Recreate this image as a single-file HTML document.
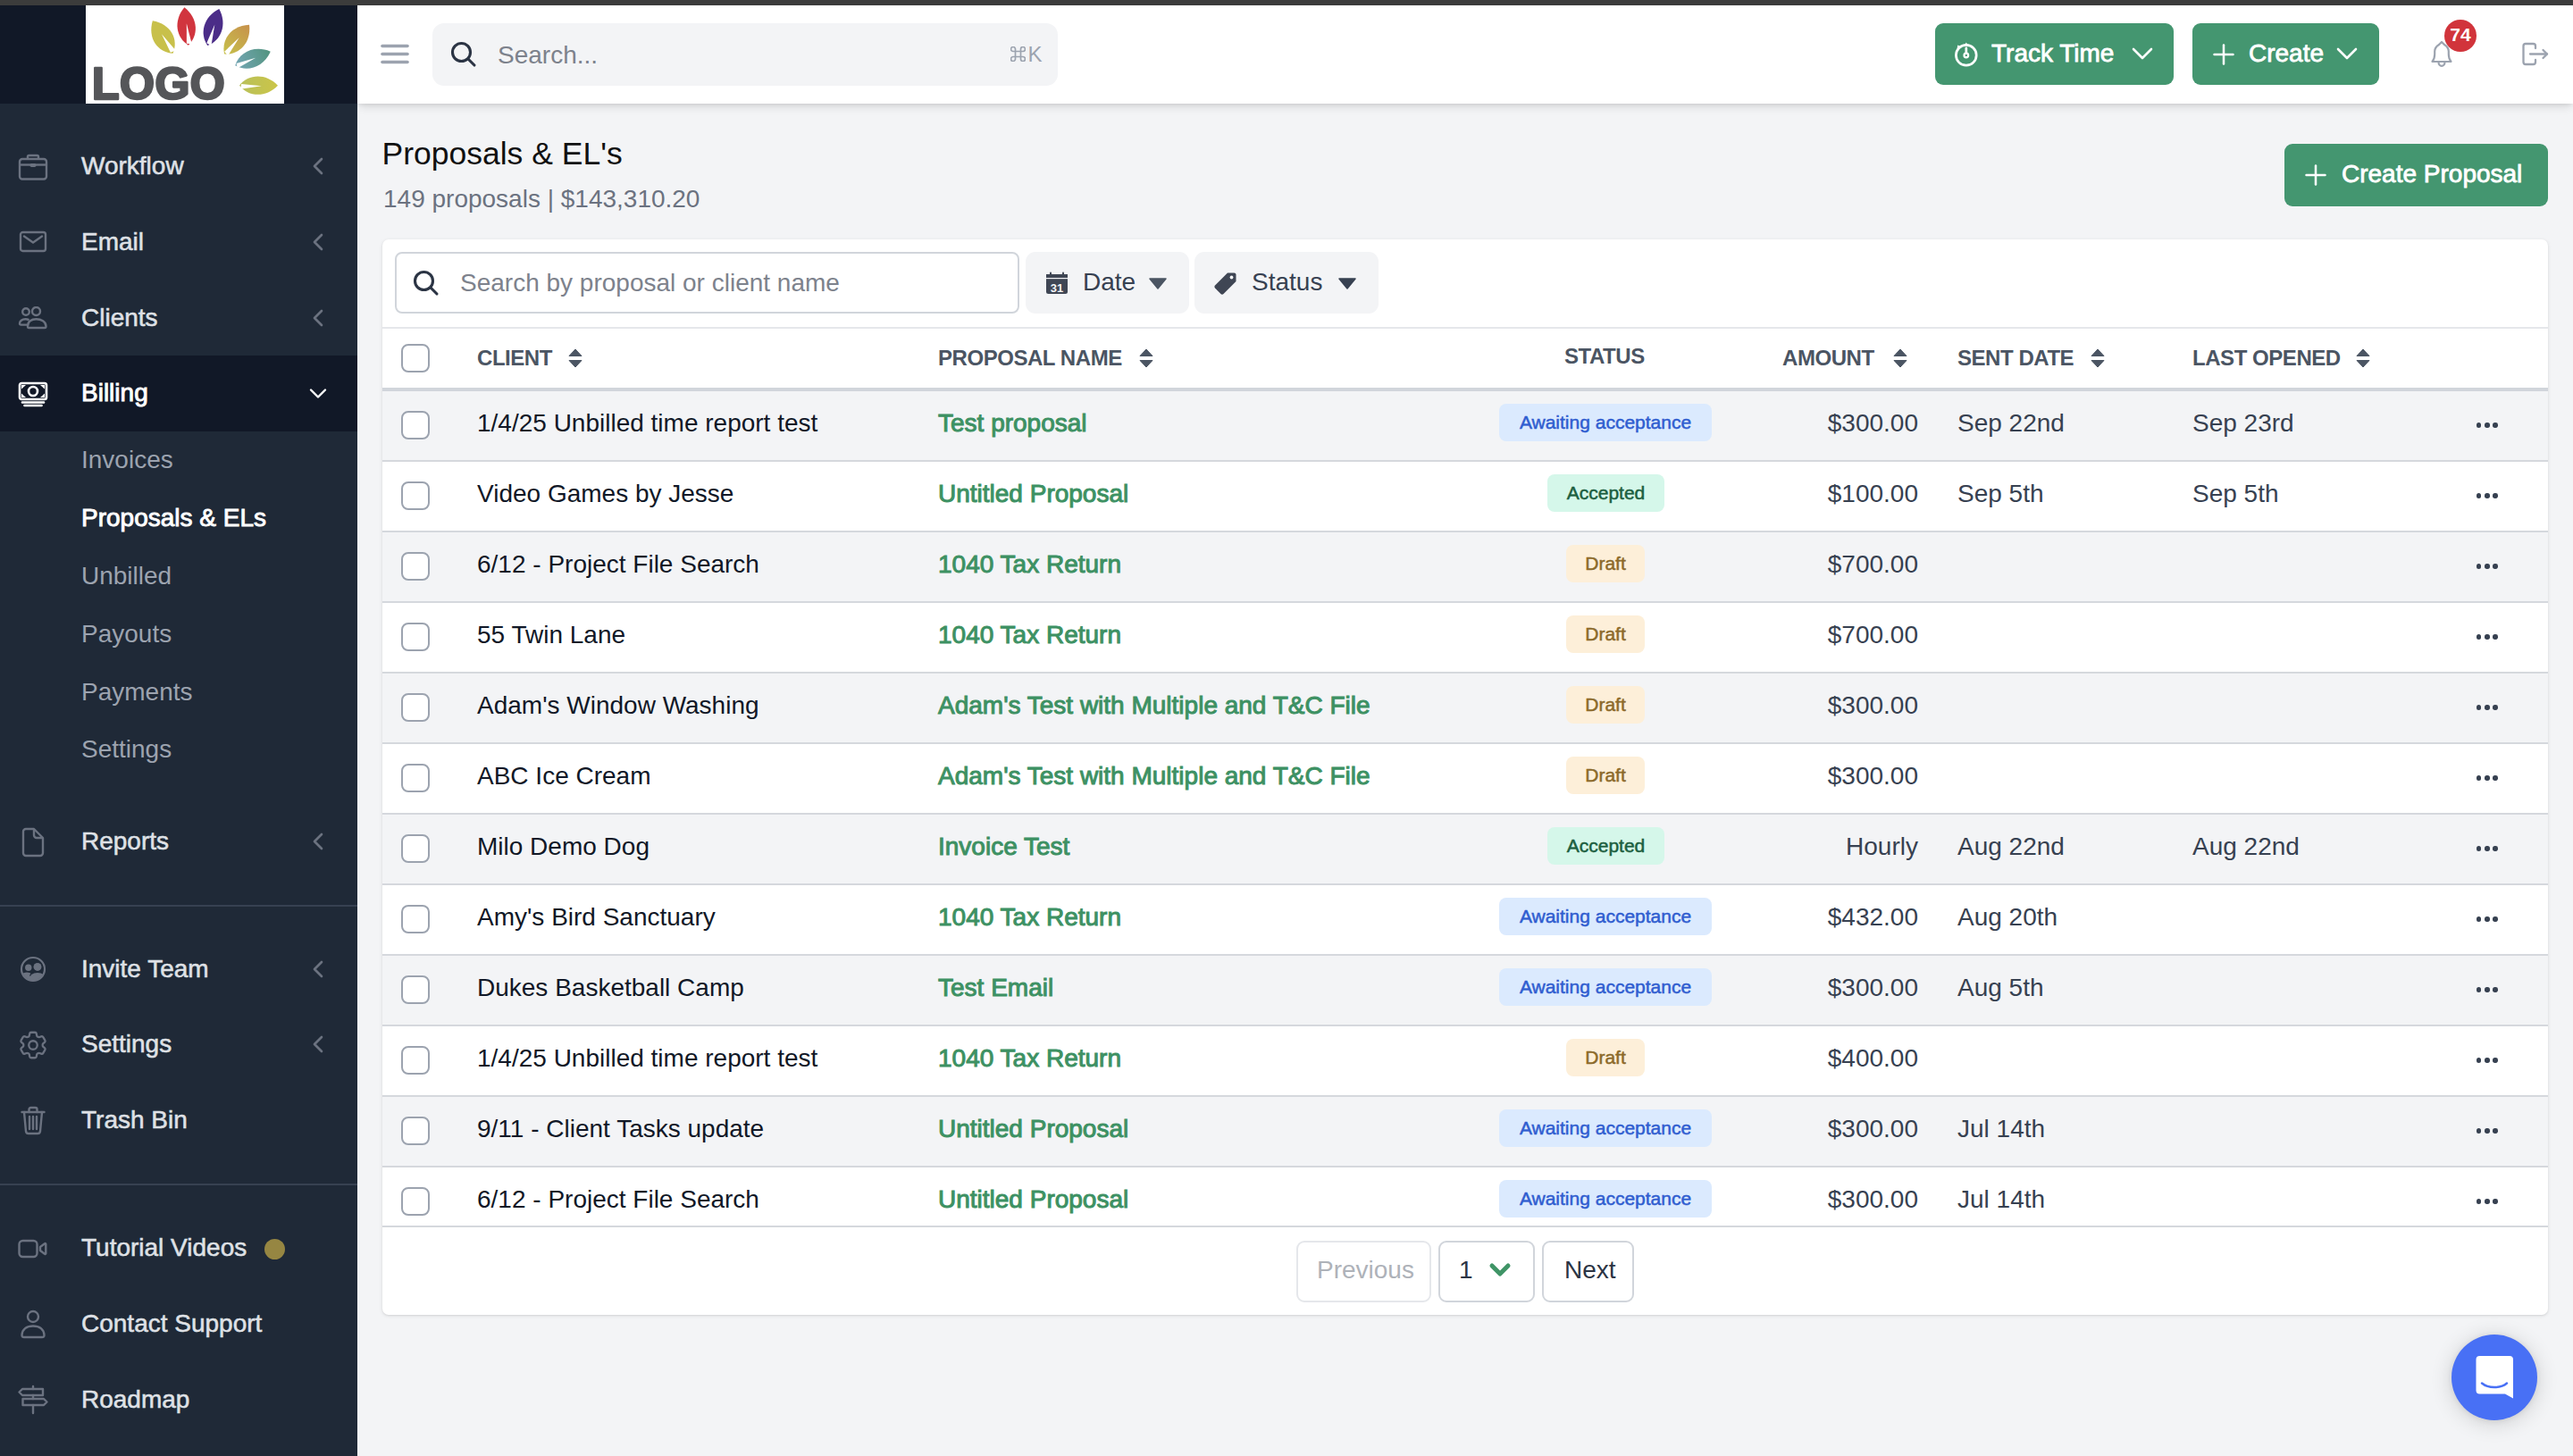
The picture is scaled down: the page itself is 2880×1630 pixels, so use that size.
<!DOCTYPE html>
<html><head><meta charset="utf-8"><title>Proposals</title>
<style>
*{box-sizing:border-box;margin:0;padding:0}
html,body{width:2880px;height:1630px;overflow:hidden;background:#f3f4f6;font-family:"Liberation Sans",sans-serif}
.a{position:absolute;display:block}
.t{position:absolute;white-space:nowrap;font-family:"Liberation Sans",sans-serif}
</style></head><body>

<div class="a" style="left:0px;top:0px;width:2880px;height:6px;background:#3c3c3c"></div>
<div class="a" style="left:400px;top:116px;width:2480px;height:1514px;background:#f3f4f6"></div>
<div class="a" style="left:400px;top:6px;width:2480px;height:110px;background:#ffffff;box-shadow:0 5px 10px -2px rgba(0,0,0,0.13),0 2px 4px -1px rgba(0,0,0,0.08)"></div>
<div class="a" style="left:0px;top:6px;width:400px;height:1624px;background:#1f2937"></div>
<div class="a" style="left:0px;top:6px;width:400px;height:110px;background:#111827"></div>
<div class="a" style="left:96px;top:6px;width:222px;height:110px;background:#ffffff"></div>
<svg class="a" style="left:96px;top:6px;" width="222" height="110" viewBox="0 0 222 110"><defs><linearGradient id="g4" x1="0" y1="1" x2="0" y2="0"><stop offset="0" stop-color="#c6c04a"/><stop offset="1" stop-color="#c7914c"/></linearGradient><linearGradient id="g5" x1="0" y1="1" x2="0" y2="0"><stop offset="0" stop-color="#74a6b4"/><stop offset="1" stop-color="#52947f"/></linearGradient><linearGradient id="g6" x1="0" y1="1" x2="0" y2="0"><stop offset="0" stop-color="#b8c05a"/><stop offset="1" stop-color="#cbc548"/></linearGradient></defs><g transform="translate(86.2,35.4) rotate(-32)"><path d="M0 -21.5 C 15.625 -7.5249999999999995 13.750000000000002 11.825000000000001 0 21.5 C -13.750000000000002 11.825000000000001 -15.625 -7.5249999999999995 0 -21.5 Z" fill="#c8c04a"/><path d="M0.625 -3.225 L4.375 20.425 L-1.875 19.35 Z" fill="#ffffff"/></g><g transform="translate(112.6,23.5) rotate(-6)"><path d="M0 -21.25 C 14.375 -7.437499999999999 12.65 11.687500000000002 0 21.25 C -12.65 11.687500000000002 -14.375 -7.437499999999999 0 -21.25 Z" fill="#d1353e"/><path d="M0.5750000000000001 -3.1875 L4.0249999999999995 20.1875 L-1.7249999999999999 19.125 Z" fill="#ffffff"/></g><g transform="translate(142.8,24.4) rotate(17.6)"><path d="M0 -21.5 C 14.375 -7.5249999999999995 12.65 11.825000000000001 0 21.5 C -12.65 11.825000000000001 -14.375 -7.5249999999999995 0 -21.5 Z" fill="#4b2d88"/><path d="M0.5750000000000001 -3.225 L4.0249999999999995 20.425 L-1.7249999999999999 19.35 Z" fill="#ffffff"/></g><g transform="translate(169.1,38.2) rotate(40.4)"><path d="M0 -21.5 C 15.0 -7.5249999999999995 13.200000000000001 11.825000000000001 0 21.5 C -13.200000000000001 11.825000000000001 -15.0 -7.5249999999999995 0 -21.5 Z" fill="url(#g4)"/><path d="M0.6000000000000001 -3.225 L4.199999999999999 20.425 L-1.7999999999999998 19.35 Z" fill="#ffffff"/></g><g transform="translate(187.0,59.5) rotate(68.4)"><path d="M0 -21.25 C 13.75 -7.437499999999999 12.100000000000001 11.687500000000002 0 21.25 C -12.100000000000001 11.687500000000002 -13.75 -7.437499999999999 0 -21.25 Z" fill="url(#g5)"/><path d="M0.55 -3.1875 L3.8499999999999996 20.1875 L-1.65 19.125 Z" fill="#ffffff"/></g><g transform="translate(193.5,89.7) rotate(90)"><path d="M0 -21.5 C 14.375 -7.5249999999999995 12.65 11.825000000000001 0 21.5 C -12.65 11.825000000000001 -14.375 -7.5249999999999995 0 -21.5 Z" fill="url(#g6)"/><path d="M0.5750000000000001 -3.225 L4.0249999999999995 20.425 L-1.7249999999999999 19.35 Z" fill="#ffffff"/></g><text x="7" y="105" font-family="Liberation Sans" font-weight="700" font-size="50" fill="#555659" stroke="#555659" stroke-width="2.6" stroke-linejoin="round" letter-spacing="0.5">LOGO</text></svg>
<svg class="a" style="left:20px;top:172px;" width="34" height="30" viewBox="0 0 34 30"><g fill="none" stroke="#6b7280" stroke-width="2.4" stroke-linejoin="round"><rect x="2" y="6" width="30" height="22.5" rx="3"/><path d="M11 6 V3.5 a1.5 1.5 0 0 1 1.5-1.5 h9 a1.5 1.5 0 0 1 1.5 1.5 V6"/><path d="M2 12.5 H32"/></g><rect x="13.5" y="11" width="7" height="4" rx="1.8" fill="#6b7280"/></svg>
<div class="t " style="left:91.0px;top:172.3px;font-size:28px;line-height:28px;color:#dfe1e6;-webkit-text-stroke:0.55px #dfe1e6;">Workflow</div>
<svg class="a" style="left:349px;top:176px;" width="14" height="20" viewBox="0 0 14 20"><path d="M11 2 L3 10 L11 18" fill="none" stroke="#6b7280" stroke-width="2.7" stroke-linecap="round" stroke-linejoin="round"/></svg>
<svg class="a" style="left:21px;top:258px;" width="32" height="26" viewBox="0 0 32 26"><g fill="none" stroke="#6b7280" stroke-width="2.4" stroke-linejoin="round" stroke-linecap="round"><rect x="2" y="2" width="28" height="21" rx="2.5"/><path d="M6 6.5 L16 13.5 L26 6.5"/></g></svg>
<div class="t " style="left:91.0px;top:257.3px;font-size:28px;line-height:28px;color:#dfe1e6;-webkit-text-stroke:0.55px #dfe1e6;">Email</div>
<svg class="a" style="left:349px;top:261px;" width="14" height="20" viewBox="0 0 14 20"><path d="M11 2 L3 10 L11 18" fill="none" stroke="#6b7280" stroke-width="2.7" stroke-linecap="round" stroke-linejoin="round"/></svg>
<svg class="a" style="left:20px;top:343px;" width="34" height="26" viewBox="0 0 34 26"><g fill="none" stroke="#6b7280" stroke-width="2.4" stroke-linejoin="round"><circle cx="9" cy="6" r="3.8"/><circle cx="20.5" cy="5.5" r="4.5"/><path d="M12.5 15.2 C11 14.5 10 14.3 8.5 14.3 C4.5 14.3 2 16.5 2 19 C2 20 2.6 20.6 3.6 20.6 H10.5"/><path d="M11 22.2 C11 17 15 14.2 20.5 14.2 C26 14.2 31.5 17 31.5 22.2 C31.5 23.2 31 24 30 24 H12.2 C11.5 24 11 23.2 11 22.2 Z"/></g></svg>
<div class="t " style="left:91.0px;top:342.3px;font-size:28px;line-height:28px;color:#dfe1e6;-webkit-text-stroke:0.55px #dfe1e6;">Clients</div>
<svg class="a" style="left:349px;top:346px;" width="14" height="20" viewBox="0 0 14 20"><path d="M11 2 L3 10 L11 18" fill="none" stroke="#6b7280" stroke-width="2.7" stroke-linecap="round" stroke-linejoin="round"/></svg>
<div class="a" style="left:0px;top:398px;width:400px;height:85px;background:#111827"></div>
<svg class="a" style="left:19px;top:426px;" width="36" height="30" viewBox="0 0 36 30"><g fill="none" stroke="#ffffff" stroke-width="2.6" stroke-linejoin="round"><rect x="3" y="3" width="30" height="18" rx="2.2"/><circle cx="18" cy="12" r="5"/></g><g fill="#ffffff"><path d="M5 5 h5 l-5 4.5z"/><path d="M31 5 h-5 l5 4.5z"/><path d="M5 19 h5 l-5 -4.5z"/><path d="M31 19 h-5 l5 -4.5z"/></g><g stroke="#ffffff" stroke-width="2.6" stroke-linecap="round"><path d="M6 24.5 H30"/><path d="M8.5 28 H27.5"/></g></svg>
<div class="t " style="left:91.0px;top:426.3px;font-size:28px;line-height:28px;color:#ffffff;-webkit-text-stroke:0.9px #ffffff;">Billing</div>
<svg class="a" style="left:345px;top:432px;" width="22" height="18" viewBox="0 0 22 18"><path d="M3 4.5 L11 12.5 L19 4.5" fill="none" stroke="#ffffff" stroke-width="2.4" stroke-linecap="round" stroke-linejoin="round"/></svg>
<div class="t " style="left:91.0px;top:501.3px;font-size:28px;line-height:28px;color:#9ca3af;">Invoices</div>
<div class="t " style="left:91.0px;top:566.1px;font-size:28px;line-height:28px;color:#ffffff;-webkit-text-stroke:0.9px #ffffff;">Proposals &amp; ELs</div>
<div class="t " style="left:91.0px;top:630.9px;font-size:28px;line-height:28px;color:#9ca3af;">Unbilled</div>
<div class="t " style="left:91.0px;top:695.7px;font-size:28px;line-height:28px;color:#9ca3af;">Payouts</div>
<div class="t " style="left:91.0px;top:760.5px;font-size:28px;line-height:28px;color:#9ca3af;">Payments</div>
<div class="t " style="left:91.0px;top:825.3px;font-size:28px;line-height:28px;color:#9ca3af;">Settings</div>
<svg class="a" style="left:23px;top:926px;" width="28" height="34" viewBox="0 0 28 34"><g fill="none" stroke="#6b7280" stroke-width="2.4" stroke-linejoin="round"><path d="M3 5 a3 3 0 0 1 3-3 h9 l10 10 v17 a3 3 0 0 1 -3 3 H6 a3 3 0 0 1 -3-3 Z"/><path d="M15 2 v7 a3 3 0 0 0 3 3 h7"/></g></svg>
<div class="t " style="left:91.0px;top:928.3px;font-size:28px;line-height:28px;color:#dfe1e6;-webkit-text-stroke:0.55px #dfe1e6;">Reports</div>
<svg class="a" style="left:349px;top:932px;" width="14" height="20" viewBox="0 0 14 20"><path d="M11 2 L3 10 L11 18" fill="none" stroke="#6b7280" stroke-width="2.7" stroke-linecap="round" stroke-linejoin="round"/></svg>
<div class="a" style="left:0px;top:1013px;width:400px;height:2px;background:#374151"></div>
<svg class="a" style="left:21px;top:1069px;" width="32" height="32" viewBox="0 0 32 32"><defs><clipPath id="cc"><circle cx="16" cy="16" r="12.5"/></clipPath></defs><circle cx="16" cy="16" r="13" fill="none" stroke="#6b7280" stroke-width="2.2"/><g clip-path="url(#cc)" fill="#6b7280"><circle cx="10.8" cy="14.2" r="3.7"/><circle cx="21" cy="13.4" r="4.5"/><ellipse cx="9" cy="26" rx="8" ry="6.5"/><ellipse cx="21" cy="28" rx="10" ry="8"/></g><path d="M12.5 23.5 L15 19.5" stroke="#1f2937" stroke-width="1.4"/></svg>
<div class="t " style="left:91.0px;top:1071.3px;font-size:28px;line-height:28px;color:#dfe1e6;-webkit-text-stroke:0.55px #dfe1e6;">Invite Team</div>
<svg class="a" style="left:349px;top:1075px;" width="14" height="20" viewBox="0 0 14 20"><path d="M11 2 L3 10 L11 18" fill="none" stroke="#6b7280" stroke-width="2.7" stroke-linecap="round" stroke-linejoin="round"/></svg>
<svg class="a" style="left:18px;top:1151px;overflow:visible" width="38" height="38" viewBox="0 0 24 24"><g fill="none" stroke="#6b7280" stroke-width="1.45" stroke-linejoin="round"><path d="M9.594 3.94c.09-.542.56-.94 1.11-.94h2.593c.55 0 1.02.398 1.11.94l.213 1.281c.063.374.313.686.645.87.074.04.147.083.22.127.325.196.72.257 1.075.124l1.217-.456a1.125 1.125 0 0 1 1.37.49l1.296 2.247a1.125 1.125 0 0 1-.26 1.431l-1.003.827c-.293.241-.438.613-.43.992a7.723 7.723 0 0 1 0 .255c-.008.378.137.75.43.991l1.004.827c.424.35.534.955.26 1.43l-1.298 2.247a1.125 1.125 0 0 1-1.369.491l-1.217-.456c-.355-.133-.75-.072-1.076.124a6.47 6.47 0 0 1-.22.128c-.331.183-.581.495-.644.869l-.213 1.281c-.09.543-.56.94-1.11.94h-2.594c-.55 0-1.019-.398-1.11-.94l-.213-1.281c-.062-.374-.312-.686-.644-.87a6.52 6.52 0 0 1-.22-.127c-.325-.196-.72-.257-1.076-.124l-1.217.456a1.125 1.125 0 0 1-1.369-.49l-1.297-2.247a1.125 1.125 0 0 1 .26-1.431l1.004-.827c.292-.24.437-.613.43-.991a6.932 6.932 0 0 1 0-.255c.007-.38-.138-.751-.43-.992l-1.004-.827a1.125 1.125 0 0 1-.26-1.43l1.297-2.247a1.125 1.125 0 0 1 1.37-.491l1.216.456c.356.133.751.072 1.076-.124.072-.044.146-.086.22-.128.332-.183.582-.495.644-.869l.214-1.28Z"/><path d="M15 12a3 3 0 1 1-6 0 3 3 0 0 1 6 0Z"/></g></svg>
<div class="t " style="left:91.0px;top:1155.3px;font-size:28px;line-height:28px;color:#dfe1e6;-webkit-text-stroke:0.55px #dfe1e6;">Settings</div>
<svg class="a" style="left:349px;top:1159px;" width="14" height="20" viewBox="0 0 14 20"><path d="M11 2 L3 10 L11 18" fill="none" stroke="#6b7280" stroke-width="2.7" stroke-linecap="round" stroke-linejoin="round"/></svg>
<svg class="a" style="left:22px;top:1238px;" width="30" height="34" viewBox="0 0 30 34"><g fill="none" stroke="#6b7280" stroke-width="2.4" stroke-linejoin="round" stroke-linecap="round"><path d="M2.5 7 H27.5"/><path d="M10.5 7 V4 a2 2 0 0 1 2-2 h5 a2 2 0 0 1 2 2 V7"/><path d="M5 7 L7 28.5 a3 3 0 0 0 3 2.5 h10 a3 3 0 0 0 3-2.5 L25 7"/><path d="M11 12 V26"/><path d="M15 12 V26"/><path d="M19 12 V26"/></g></svg>
<div class="t " style="left:91.0px;top:1240.3px;font-size:28px;line-height:28px;color:#dfe1e6;-webkit-text-stroke:0.55px #dfe1e6;">Trash Bin</div>
<div class="a" style="left:0px;top:1325px;width:400px;height:2px;background:#374151"></div>
<svg class="a" style="left:19px;top:1386px;" width="36" height="24" viewBox="0 0 36 24"><g fill="none" stroke="#6b7280" stroke-width="2.4" stroke-linejoin="round"><rect x="2.5" y="3" width="20" height="18" rx="4"/><path d="M26 10 L31 6.2 a0.8 0.8 0 0 1 1.3 0.6 V17.2 a0.8 0.8 0 0 1 -1.3 0.6 L26 14 Z"/></g></svg>
<div class="t " style="left:91.0px;top:1383.3px;font-size:28px;line-height:28px;color:#dfe1e6;-webkit-text-stroke:0.55px #dfe1e6;">Tutorial Videos</div>
<div class="a" style="left:296px;top:1387px;width:23px;height:23px;background:#968642;border-radius:50%"></div>
<svg class="a" style="left:21px;top:1466px;" width="32" height="34" viewBox="0 0 32 34"><g fill="none" stroke="#6b7280" stroke-width="2.4" stroke-linejoin="round"><circle cx="16" cy="8" r="6"/><path d="M3.5 28.5 C4 22 9 18.5 16 18.5 C23 18.5 28 22 28.5 28.5 C28.6 30.5 27.5 31 26 31 H6 C4.5 31 3.4 30.5 3.5 28.5 Z"/></g></svg>
<div class="t " style="left:91.0px;top:1468.3px;font-size:28px;line-height:28px;color:#dfe1e6;-webkit-text-stroke:0.55px #dfe1e6;">Contact Support</div>
<svg class="a" style="left:19px;top:1550px;" width="36" height="34" viewBox="0 0 36 34"><g fill="none" stroke="#6b7280" stroke-width="2.4" stroke-linejoin="round" stroke-linecap="round"><path d="M18 2 V5"/><path d="M18 12 V16"/><path d="M18 23 V32"/><path d="M6 5 H29 V12 H6 L2.5 8.5 Z"/><path d="M6.5 16 H30 L33.5 19.5 L30 23 H6.5 Z"/></g></svg>
<div class="t " style="left:91.0px;top:1552.8px;font-size:28px;line-height:28px;color:#dfe1e6;-webkit-text-stroke:0.55px #dfe1e6;">Roadmap</div>
<svg class="a" style="left:422px;top:44px;" width="40" height="34" viewBox="0 0 40 34"><g stroke="#9ca3af" stroke-width="3.6" stroke-linecap="round"><path d="M6 7.5 H34"/><path d="M6 16.5 H34"/><path d="M6 25.5 H34"/></g></svg>
<div class="a" style="left:484px;top:26px;width:700px;height:70px;background:#f3f4f6;border-radius:13px"></div>
<svg class="a" style="left:500px;top:42px;" width="40" height="38" viewBox="0 0 40 38"><g fill="none" stroke="#2b3444" stroke-width="3.1" stroke-linecap="round"><circle cx="16.5" cy="16.5" r="10"/><path d="M24 24 L31 31"/></g></svg>
<div class="t " style="left:557.0px;top:47.8px;font-size:28px;line-height:28px;color:#7d828c;">Search...</div>
<svg class="a" style="left:1131px;top:52px;" width="17" height="17" viewBox="0 0 17 17"><path d="M5.5 5.5 V3 A2.5 2.5 0 1 0 3 5.5 H14 A2.5 2.5 0 1 0 11.5 3 V14 A2.5 2.5 0 1 0 14 11.5 H3 A2.5 2.5 0 1 0 5.5 14 Z" fill="none" stroke="#9ca3af" stroke-width="1.7"/></svg>
<div class="t " style="left:1150.5px;top:48.5px;font-size:24px;line-height:24px;color:#9ca3af;">K</div>
<div class="a" style="left:2166px;top:26px;width:267px;height:69px;background:#449670;border-radius:9px"></div>
<svg class="a" style="left:2184px;top:43px;" width="34" height="34" viewBox="0 0 34 34"><g fill="none" stroke="#fff" stroke-width="2.7" stroke-linecap="round"><circle cx="16.8" cy="18.8" r="11.4"/><path d="M16.8 10.8 V16.2"/><circle cx="16.8" cy="19" r="2.3" stroke-width="2.3"/></g><path d="M14.8 7.8 L16.8 4.6 L18.8 7.8 Z" fill="#fff"/><path d="M6.6 11.6 L7.2 7.6 L10.8 9 Z" fill="#fff"/></svg>
<div class="t " style="left:2229.0px;top:46.3px;font-size:28px;line-height:28px;color:#ffffff;-webkit-text-stroke:0.8px #ffffff;">Track Time</div>
<svg class="a" style="left:2384px;top:50px;" width="28" height="22" viewBox="0 0 28 22"><path d="M4 5 L14 15 L24 5" fill="none" stroke="#fff" stroke-width="2.6" stroke-linecap="round" stroke-linejoin="round"/></svg>
<div class="a" style="left:2454px;top:26px;width:209px;height:69px;background:#449670;border-radius:9px"></div>
<svg class="a" style="left:2474px;top:46px;" width="30" height="30" viewBox="0 0 30 30"><g stroke="#fff" stroke-width="2.5" stroke-linecap="round"><path d="M15 4.5 V25.5"/><path d="M4.5 15 H25.5"/></g></svg>
<div class="t " style="left:2517.0px;top:46.3px;font-size:28px;line-height:28px;color:#ffffff;-webkit-text-stroke:0.8px #ffffff;">Create</div>
<svg class="a" style="left:2613px;top:50px;" width="28" height="22" viewBox="0 0 28 22"><path d="M4 5 L14 15 L24 5" fill="none" stroke="#fff" stroke-width="2.6" stroke-linecap="round" stroke-linejoin="round"/></svg>
<svg class="a" style="left:2714px;top:42px;" width="38" height="38" viewBox="0 0 38 38"><g fill="none" stroke="#9ca3af" stroke-width="2.2" stroke-linejoin="round" stroke-linecap="round"><path d="M8.5 27 C10.5 24.5 11.2 22 11.2 18.5 V15.5 C11.2 11.5 13.5 9.5 16 8 L19 5 L22 8 C24.5 9.5 26.8 11.5 26.8 15.5 V18.5 C26.8 22 27.5 24.5 29.5 27 Z"/><path d="M15.5 27.5 C15.5 30 17 31.8 19 31.8 C21 31.8 22.5 30 22.5 27.5"/></g></svg>
<div class="a" style="left:2736px;top:22px;width:36px;height:36px;background:#d1343b;border-radius:50%"></div>
<div class="t " style="left:2734.0px;width:40px;text-align:center;top:28.2px;font-size:21px;line-height:21px;color:#ffffff;font-weight:700;">74</div>
<svg class="a" style="left:2820px;top:45px;" width="36" height="32" viewBox="0 0 36 32"><g fill="none" stroke="#9ca3af" stroke-width="2.3" stroke-linecap="round" stroke-linejoin="round"><path d="M18 9 V6.5 a2.5 2.5 0 0 0 -2.5-2.5 H7 a2.5 2.5 0 0 0 -2.5 2.5 V24.5 a2.5 2.5 0 0 0 2.5 2.5 H15.5 a2.5 2.5 0 0 0 2.5-2.5 V22"/><path d="M12 15.5 H31"/><path d="M26.5 11 L31 15.5 L26.5 20"/></g></svg>
<div class="t " style="left:427.5px;top:155.4px;font-size:35.5px;line-height:35.5px;color:#111111;">Proposals &amp; EL's</div>
<div class="t " style="left:429.0px;top:208.9px;font-size:28px;line-height:28px;color:#6b7280;">149 proposals | $143,310.20</div>
<div class="a" style="left:2557px;top:161px;width:295px;height:70px;background:#449670;border-radius:9px"></div>
<svg class="a" style="left:2577px;top:181px;" width="30" height="30" viewBox="0 0 30 30"><g stroke="#fff" stroke-width="2.5" stroke-linecap="round"><path d="M15 4.5 V25.5"/><path d="M4.5 15 H25.5"/></g></svg>
<div class="t " style="left:2621.0px;top:181.3px;font-size:28px;line-height:28px;color:#ffffff;-webkit-text-stroke:0.8px #ffffff;">Create Proposal</div>
<div class="a" style="left:428px;top:268px;width:2424px;height:1204px;background:#ffffff;border-radius:7px;box-shadow:0 1px 4px rgba(0,0,0,0.10),0 1px 2px rgba(0,0,0,0.06)"></div>
<div class="a" style="left:442px;top:282px;width:699px;height:69px;border:2px solid #d1d5db;border-radius:8px;background:#fff"></div>
<svg class="a" style="left:458px;top:298px;" width="40" height="38" viewBox="0 0 40 38"><g fill="none" stroke="#2b3444" stroke-width="3.1" stroke-linecap="round"><circle cx="16.5" cy="16.5" r="10"/><path d="M24 24 L31 31"/></g></svg>
<div class="t " style="left:515.0px;top:303.3px;font-size:28px;line-height:28px;color:#7d828c;">Search by proposal or client name</div>
<div class="a" style="left:1148px;top:282px;width:183px;height:69px;background:#f3f4f6;border-radius:11px"></div>
<svg class="a" style="left:1170px;top:304px;" width="26" height="26" viewBox="0 0 26 26"><rect x="1" y="3" width="24" height="22" rx="2.5" fill="#3f4654"/><rect x="1" y="3" width="24" height="4" fill="#3f4654"/><g stroke="#3f4654" stroke-width="2" stroke-linecap="round"><path d="M6 1.5 V4"/><path d="M20 1.5 V4"/></g><rect x="1" y="7" width="24" height="1.2" fill="#f3f4f6"/><text x="13" y="22.5" text-anchor="middle" font-family="Liberation Sans" font-weight="700" font-size="13" fill="#f3f4f6">31</text></svg>
<div class="t " style="left:1212.0px;top:302.0px;font-size:28px;line-height:28px;color:#374151;">Date</div>
<svg class="a" style="left:1285px;top:310px;" width="22" height="14" viewBox="0 0 22 14"><path d="M2 2 H20 L11 13 Z" fill="#4b5563" stroke="#4b5563" stroke-width="1.5" stroke-linejoin="round"/></svg>
<div class="a" style="left:1337px;top:282px;width:206px;height:69px;background:#f3f4f6;border-radius:11px"></div>
<svg class="a" style="left:1358px;top:303px;" width="28" height="28" viewBox="0 0 28 28"><path d="M16 2.5 H23.5 a2 2 0 0 1 2 2 V12 L11.5 26 a2.2 2.2 0 0 1 -3.1 0 L2 19.6 a2.2 2.2 0 0 1 0-3.1 Z" fill="#3f4654"/><circle cx="20.5" cy="7.5" r="1.9" fill="#f3f4f6"/></svg>
<div class="t " style="left:1401.0px;top:302.0px;font-size:28px;line-height:28px;color:#374151;">Status</div>
<svg class="a" style="left:1497px;top:310px;" width="22" height="14" viewBox="0 0 22 14"><path d="M2 2 H20 L11 13 Z" fill="#374151" stroke="#374151" stroke-width="1.5" stroke-linejoin="round"/></svg>
<div class="a" style="left:428px;top:366px;width:2424px;height:2px;background:#e5e7eb"></div>
<div class="a" style="left:449px;top:385px;width:32px;height:32px;border:2px solid #9ca3af;border-radius:8px;background:#fff"></div>
<div class="t " style="left:534.0px;top:388.7px;font-size:24px;line-height:24px;color:#4b5563;font-weight:700;letter-spacing:-0.45px;">CLIENT</div>
<svg class="a" style="left:636px;top:390px;" width="16" height="22" viewBox="0 0 16 22"><path d="M8 1 L15 8.5 H1 Z" fill="#4b5563" stroke="#4b5563" stroke-width="1" stroke-linejoin="round"/><path d="M8 21 L15 13.5 H1 Z" fill="#4b5563" stroke="#4b5563" stroke-width="1" stroke-linejoin="round"/></svg>
<div class="t " style="left:1050.0px;top:388.7px;font-size:24px;line-height:24px;color:#4b5563;font-weight:700;letter-spacing:-0.45px;">PROPOSAL NAME</div>
<svg class="a" style="left:1275px;top:390px;" width="16" height="22" viewBox="0 0 16 22"><path d="M8 1 L15 8.5 H1 Z" fill="#4b5563" stroke="#4b5563" stroke-width="1" stroke-linejoin="round"/><path d="M8 21 L15 13.5 H1 Z" fill="#4b5563" stroke="#4b5563" stroke-width="1" stroke-linejoin="round"/></svg>
<div class="t " style="left:1751.0px;top:386.7px;font-size:24px;line-height:24px;color:#4b5563;font-weight:700;letter-spacing:-0.45px;">STATUS</div>
<div class="t " style="left:1995.0px;top:388.7px;font-size:24px;line-height:24px;color:#4b5563;font-weight:700;letter-spacing:-0.45px;">AMOUNT</div>
<svg class="a" style="left:2119px;top:390px;" width="16" height="22" viewBox="0 0 16 22"><path d="M8 1 L15 8.5 H1 Z" fill="#4b5563" stroke="#4b5563" stroke-width="1" stroke-linejoin="round"/><path d="M8 21 L15 13.5 H1 Z" fill="#4b5563" stroke="#4b5563" stroke-width="1" stroke-linejoin="round"/></svg>
<div class="t " style="left:2191.0px;top:388.7px;font-size:24px;line-height:24px;color:#4b5563;font-weight:700;letter-spacing:-0.45px;">SENT DATE</div>
<svg class="a" style="left:2340px;top:390px;" width="16" height="22" viewBox="0 0 16 22"><path d="M8 1 L15 8.5 H1 Z" fill="#4b5563" stroke="#4b5563" stroke-width="1" stroke-linejoin="round"/><path d="M8 21 L15 13.5 H1 Z" fill="#4b5563" stroke="#4b5563" stroke-width="1" stroke-linejoin="round"/></svg>
<div class="t " style="left:2454.0px;top:388.7px;font-size:24px;line-height:24px;color:#4b5563;font-weight:700;letter-spacing:-0.45px;">LAST OPENED</div>
<svg class="a" style="left:2637px;top:390px;" width="16" height="22" viewBox="0 0 16 22"><path d="M8 1 L15 8.5 H1 Z" fill="#4b5563" stroke="#4b5563" stroke-width="1" stroke-linejoin="round"/><path d="M8 21 L15 13.5 H1 Z" fill="#4b5563" stroke="#4b5563" stroke-width="1" stroke-linejoin="round"/></svg>
<div class="a" style="left:428px;top:434px;width:2424px;height:4px;background:#d1d5db"></div>
<div class="a" style="left:428px;top:438px;width:2424px;height:934px;overflow:hidden">
<div class="a" style="left:0px;top:0px;width:2424px;height:77px;background:#f3f4f6"></div>
<div class="a" style="left:0px;top:77px;width:2424px;height:2px;background:#d5d8dd"></div>
<div class="a" style="left:21px;top:22px;width:32px;height:32px;border:2px solid #9ca3af;border-radius:8px;background:#fff"></div>
<div class="t " style="left:106.0px;top:22.3px;font-size:28px;line-height:28px;color:#111827;">1/4/25 Unbilled time report test</div>
<div class="t " style="left:622.0px;top:22.3px;font-size:28px;line-height:28px;color:#3d9163;-webkit-text-stroke:1.0px #3d9163;">Test proposal</div>
<div class="a" style="left:1250px;top:14px;width:238px;height:42px;background:#dbeafe;border-radius:8px"></div>
<div class="t " style="left:1250.0px;width:238px;text-align:center;top:23.6px;font-size:21px;line-height:21px;color:#2f5dd0;-webkit-text-stroke:0.5px #2f5dd0;">Awaiting acceptance</div>
<div class="t " style="left:1519.0px;width:200px;text-align:right;top:22.3px;font-size:28px;line-height:28px;color:#374151;">$300.00</div>
<div class="t " style="left:1763.0px;top:22.3px;font-size:28px;line-height:28px;color:#374151;">Sep 22nd</div>
<div class="t " style="left:2026.0px;top:22.3px;font-size:28px;line-height:28px;color:#374151;">Sep 23rd</div>
<div class="a" style="left:2344.0px;top:35.39999999999998px;width:5.400000000000091px;height:5.400000000000034px;background:#374151;border-radius:50%"></div>
<div class="a" style="left:2353.2px;top:35.39999999999998px;width:5.400000000000091px;height:5.400000000000034px;background:#374151;border-radius:50%"></div>
<div class="a" style="left:2362.4px;top:35.39999999999998px;width:5.400000000000091px;height:5.400000000000034px;background:#374151;border-radius:50%"></div>
<div class="a" style="left:0px;top:79px;width:2424px;height:77px;background:#ffffff"></div>
<div class="a" style="left:0px;top:156px;width:2424px;height:2px;background:#d5d8dd"></div>
<div class="a" style="left:21px;top:101px;width:32px;height:32px;border:2px solid #9ca3af;border-radius:8px;background:#fff"></div>
<div class="t " style="left:106.0px;top:101.3px;font-size:28px;line-height:28px;color:#111827;">Video Games by Jesse</div>
<div class="t " style="left:622.0px;top:101.3px;font-size:28px;line-height:28px;color:#3d9163;-webkit-text-stroke:1.0px #3d9163;">Untitled Proposal</div>
<div class="a" style="left:1304px;top:93px;width:131px;height:42px;background:#d5f7ea;border-radius:8px"></div>
<div class="t " style="left:1304.0px;width:131px;text-align:center;top:102.6px;font-size:21px;line-height:21px;color:#1c5e40;-webkit-text-stroke:0.5px #1c5e40;">Accepted</div>
<div class="t " style="left:1519.0px;width:200px;text-align:right;top:101.3px;font-size:28px;line-height:28px;color:#374151;">$100.00</div>
<div class="t " style="left:1763.0px;top:101.3px;font-size:28px;line-height:28px;color:#374151;">Sep 5th</div>
<div class="t " style="left:2026.0px;top:101.3px;font-size:28px;line-height:28px;color:#374151;">Sep 5th</div>
<div class="a" style="left:2344.0px;top:114.39999999999998px;width:5.400000000000091px;height:5.399999999999977px;background:#374151;border-radius:50%"></div>
<div class="a" style="left:2353.2px;top:114.39999999999998px;width:5.400000000000091px;height:5.399999999999977px;background:#374151;border-radius:50%"></div>
<div class="a" style="left:2362.4px;top:114.39999999999998px;width:5.400000000000091px;height:5.399999999999977px;background:#374151;border-radius:50%"></div>
<div class="a" style="left:0px;top:158px;width:2424px;height:77px;background:#f3f4f6"></div>
<div class="a" style="left:0px;top:235px;width:2424px;height:2px;background:#d5d8dd"></div>
<div class="a" style="left:21px;top:180px;width:32px;height:32px;border:2px solid #9ca3af;border-radius:8px;background:#fff"></div>
<div class="t " style="left:106.0px;top:180.3px;font-size:28px;line-height:28px;color:#111827;">6/12 - Project File Search</div>
<div class="t " style="left:622.0px;top:180.3px;font-size:28px;line-height:28px;color:#3d9163;-webkit-text-stroke:1.0px #3d9163;">1040 Tax Return</div>
<div class="a" style="left:1325px;top:172px;width:88px;height:42px;background:#fdefd9;border-radius:8px"></div>
<div class="t " style="left:1325.0px;width:88px;text-align:center;top:181.6px;font-size:21px;line-height:21px;color:#8c6a2a;-webkit-text-stroke:0.5px #8c6a2a;">Draft</div>
<div class="t " style="left:1519.0px;width:200px;text-align:right;top:180.3px;font-size:28px;line-height:28px;color:#374151;">$700.00</div>
<div class="a" style="left:2344.0px;top:193.39999999999998px;width:5.400000000000091px;height:5.399999999999977px;background:#374151;border-radius:50%"></div>
<div class="a" style="left:2353.2px;top:193.39999999999998px;width:5.400000000000091px;height:5.399999999999977px;background:#374151;border-radius:50%"></div>
<div class="a" style="left:2362.4px;top:193.39999999999998px;width:5.400000000000091px;height:5.399999999999977px;background:#374151;border-radius:50%"></div>
<div class="a" style="left:0px;top:237px;width:2424px;height:77px;background:#ffffff"></div>
<div class="a" style="left:0px;top:314px;width:2424px;height:2px;background:#d5d8dd"></div>
<div class="a" style="left:21px;top:259px;width:32px;height:32px;border:2px solid #9ca3af;border-radius:8px;background:#fff"></div>
<div class="t " style="left:106.0px;top:259.3px;font-size:28px;line-height:28px;color:#111827;">55 Twin Lane</div>
<div class="t " style="left:622.0px;top:259.3px;font-size:28px;line-height:28px;color:#3d9163;-webkit-text-stroke:1.0px #3d9163;">1040 Tax Return</div>
<div class="a" style="left:1325px;top:251px;width:88px;height:42px;background:#fdefd9;border-radius:8px"></div>
<div class="t " style="left:1325.0px;width:88px;text-align:center;top:260.6px;font-size:21px;line-height:21px;color:#8c6a2a;-webkit-text-stroke:0.5px #8c6a2a;">Draft</div>
<div class="t " style="left:1519.0px;width:200px;text-align:right;top:259.3px;font-size:28px;line-height:28px;color:#374151;">$700.00</div>
<div class="a" style="left:2344.0px;top:272.4px;width:5.400000000000091px;height:5.399999999999977px;background:#374151;border-radius:50%"></div>
<div class="a" style="left:2353.2px;top:272.4px;width:5.400000000000091px;height:5.399999999999977px;background:#374151;border-radius:50%"></div>
<div class="a" style="left:2362.4px;top:272.4px;width:5.400000000000091px;height:5.399999999999977px;background:#374151;border-radius:50%"></div>
<div class="a" style="left:0px;top:316px;width:2424px;height:77px;background:#f3f4f6"></div>
<div class="a" style="left:0px;top:393px;width:2424px;height:2px;background:#d5d8dd"></div>
<div class="a" style="left:21px;top:338px;width:32px;height:32px;border:2px solid #9ca3af;border-radius:8px;background:#fff"></div>
<div class="t " style="left:106.0px;top:338.3px;font-size:28px;line-height:28px;color:#111827;">Adam's Window Washing</div>
<div class="t " style="left:622.0px;top:338.3px;font-size:28px;line-height:28px;color:#3d9163;-webkit-text-stroke:1.0px #3d9163;">Adam's Test with Multiple and T&amp;C File</div>
<div class="a" style="left:1325px;top:330px;width:88px;height:42px;background:#fdefd9;border-radius:8px"></div>
<div class="t " style="left:1325.0px;width:88px;text-align:center;top:339.6px;font-size:21px;line-height:21px;color:#8c6a2a;-webkit-text-stroke:0.5px #8c6a2a;">Draft</div>
<div class="t " style="left:1519.0px;width:200px;text-align:right;top:338.3px;font-size:28px;line-height:28px;color:#374151;">$300.00</div>
<div class="a" style="left:2344.0px;top:351.4px;width:5.400000000000091px;height:5.399999999999977px;background:#374151;border-radius:50%"></div>
<div class="a" style="left:2353.2px;top:351.4px;width:5.400000000000091px;height:5.399999999999977px;background:#374151;border-radius:50%"></div>
<div class="a" style="left:2362.4px;top:351.4px;width:5.400000000000091px;height:5.399999999999977px;background:#374151;border-radius:50%"></div>
<div class="a" style="left:0px;top:395px;width:2424px;height:77px;background:#ffffff"></div>
<div class="a" style="left:0px;top:472px;width:2424px;height:2px;background:#d5d8dd"></div>
<div class="a" style="left:21px;top:417px;width:32px;height:32px;border:2px solid #9ca3af;border-radius:8px;background:#fff"></div>
<div class="t " style="left:106.0px;top:417.3px;font-size:28px;line-height:28px;color:#111827;">ABC Ice Cream</div>
<div class="t " style="left:622.0px;top:417.3px;font-size:28px;line-height:28px;color:#3d9163;-webkit-text-stroke:1.0px #3d9163;">Adam's Test with Multiple and T&amp;C File</div>
<div class="a" style="left:1325px;top:409px;width:88px;height:42px;background:#fdefd9;border-radius:8px"></div>
<div class="t " style="left:1325.0px;width:88px;text-align:center;top:418.6px;font-size:21px;line-height:21px;color:#8c6a2a;-webkit-text-stroke:0.5px #8c6a2a;">Draft</div>
<div class="t " style="left:1519.0px;width:200px;text-align:right;top:417.3px;font-size:28px;line-height:28px;color:#374151;">$300.00</div>
<div class="a" style="left:2344.0px;top:430.4px;width:5.400000000000091px;height:5.399999999999977px;background:#374151;border-radius:50%"></div>
<div class="a" style="left:2353.2px;top:430.4px;width:5.400000000000091px;height:5.399999999999977px;background:#374151;border-radius:50%"></div>
<div class="a" style="left:2362.4px;top:430.4px;width:5.400000000000091px;height:5.399999999999977px;background:#374151;border-radius:50%"></div>
<div class="a" style="left:0px;top:474px;width:2424px;height:77px;background:#f3f4f6"></div>
<div class="a" style="left:0px;top:551px;width:2424px;height:2px;background:#d5d8dd"></div>
<div class="a" style="left:21px;top:496px;width:32px;height:32px;border:2px solid #9ca3af;border-radius:8px;background:#fff"></div>
<div class="t " style="left:106.0px;top:496.3px;font-size:28px;line-height:28px;color:#111827;">Milo Demo Dog</div>
<div class="t " style="left:622.0px;top:496.3px;font-size:28px;line-height:28px;color:#3d9163;-webkit-text-stroke:1.0px #3d9163;">Invoice Test</div>
<div class="a" style="left:1304px;top:488px;width:131px;height:42px;background:#d5f7ea;border-radius:8px"></div>
<div class="t " style="left:1304.0px;width:131px;text-align:center;top:497.6px;font-size:21px;line-height:21px;color:#1c5e40;-webkit-text-stroke:0.5px #1c5e40;">Accepted</div>
<div class="t " style="left:1519.0px;width:200px;text-align:right;top:496.3px;font-size:28px;line-height:28px;color:#374151;">Hourly</div>
<div class="t " style="left:1763.0px;top:496.3px;font-size:28px;line-height:28px;color:#374151;">Aug 22nd</div>
<div class="t " style="left:2026.0px;top:496.3px;font-size:28px;line-height:28px;color:#374151;">Aug 22nd</div>
<div class="a" style="left:2344.0px;top:509.4px;width:5.400000000000091px;height:5.399999999999977px;background:#374151;border-radius:50%"></div>
<div class="a" style="left:2353.2px;top:509.4px;width:5.400000000000091px;height:5.399999999999977px;background:#374151;border-radius:50%"></div>
<div class="a" style="left:2362.4px;top:509.4px;width:5.400000000000091px;height:5.399999999999977px;background:#374151;border-radius:50%"></div>
<div class="a" style="left:0px;top:553px;width:2424px;height:77px;background:#ffffff"></div>
<div class="a" style="left:0px;top:630px;width:2424px;height:2px;background:#d5d8dd"></div>
<div class="a" style="left:21px;top:575px;width:32px;height:32px;border:2px solid #9ca3af;border-radius:8px;background:#fff"></div>
<div class="t " style="left:106.0px;top:575.3px;font-size:28px;line-height:28px;color:#111827;">Amy's Bird Sanctuary</div>
<div class="t " style="left:622.0px;top:575.3px;font-size:28px;line-height:28px;color:#3d9163;-webkit-text-stroke:1.0px #3d9163;">1040 Tax Return</div>
<div class="a" style="left:1250px;top:567px;width:238px;height:42px;background:#dbeafe;border-radius:8px"></div>
<div class="t " style="left:1250.0px;width:238px;text-align:center;top:576.6px;font-size:21px;line-height:21px;color:#2f5dd0;-webkit-text-stroke:0.5px #2f5dd0;">Awaiting acceptance</div>
<div class="t " style="left:1519.0px;width:200px;text-align:right;top:575.3px;font-size:28px;line-height:28px;color:#374151;">$432.00</div>
<div class="t " style="left:1763.0px;top:575.3px;font-size:28px;line-height:28px;color:#374151;">Aug 20th</div>
<div class="a" style="left:2344.0px;top:588.4000000000001px;width:5.400000000000091px;height:5.399999999999864px;background:#374151;border-radius:50%"></div>
<div class="a" style="left:2353.2px;top:588.4000000000001px;width:5.400000000000091px;height:5.399999999999864px;background:#374151;border-radius:50%"></div>
<div class="a" style="left:2362.4px;top:588.4000000000001px;width:5.400000000000091px;height:5.399999999999864px;background:#374151;border-radius:50%"></div>
<div class="a" style="left:0px;top:632px;width:2424px;height:77px;background:#f3f4f6"></div>
<div class="a" style="left:0px;top:709px;width:2424px;height:2px;background:#d5d8dd"></div>
<div class="a" style="left:21px;top:654px;width:32px;height:32px;border:2px solid #9ca3af;border-radius:8px;background:#fff"></div>
<div class="t " style="left:106.0px;top:654.3px;font-size:28px;line-height:28px;color:#111827;">Dukes Basketball Camp</div>
<div class="t " style="left:622.0px;top:654.3px;font-size:28px;line-height:28px;color:#3d9163;-webkit-text-stroke:1.0px #3d9163;">Test Email</div>
<div class="a" style="left:1250px;top:646px;width:238px;height:42px;background:#dbeafe;border-radius:8px"></div>
<div class="t " style="left:1250.0px;width:238px;text-align:center;top:655.6px;font-size:21px;line-height:21px;color:#2f5dd0;-webkit-text-stroke:0.5px #2f5dd0;">Awaiting acceptance</div>
<div class="t " style="left:1519.0px;width:200px;text-align:right;top:654.3px;font-size:28px;line-height:28px;color:#374151;">$300.00</div>
<div class="t " style="left:1763.0px;top:654.3px;font-size:28px;line-height:28px;color:#374151;">Aug 5th</div>
<div class="a" style="left:2344.0px;top:667.4000000000001px;width:5.400000000000091px;height:5.399999999999864px;background:#374151;border-radius:50%"></div>
<div class="a" style="left:2353.2px;top:667.4000000000001px;width:5.400000000000091px;height:5.399999999999864px;background:#374151;border-radius:50%"></div>
<div class="a" style="left:2362.4px;top:667.4000000000001px;width:5.400000000000091px;height:5.399999999999864px;background:#374151;border-radius:50%"></div>
<div class="a" style="left:0px;top:711px;width:2424px;height:77px;background:#ffffff"></div>
<div class="a" style="left:0px;top:788px;width:2424px;height:2px;background:#d5d8dd"></div>
<div class="a" style="left:21px;top:733px;width:32px;height:32px;border:2px solid #9ca3af;border-radius:8px;background:#fff"></div>
<div class="t " style="left:106.0px;top:733.3px;font-size:28px;line-height:28px;color:#111827;">1/4/25 Unbilled time report test</div>
<div class="t " style="left:622.0px;top:733.3px;font-size:28px;line-height:28px;color:#3d9163;-webkit-text-stroke:1.0px #3d9163;">1040 Tax Return</div>
<div class="a" style="left:1325px;top:725px;width:88px;height:42px;background:#fdefd9;border-radius:8px"></div>
<div class="t " style="left:1325.0px;width:88px;text-align:center;top:734.6px;font-size:21px;line-height:21px;color:#8c6a2a;-webkit-text-stroke:0.5px #8c6a2a;">Draft</div>
<div class="t " style="left:1519.0px;width:200px;text-align:right;top:733.3px;font-size:28px;line-height:28px;color:#374151;">$400.00</div>
<div class="a" style="left:2344.0px;top:746.4000000000001px;width:5.400000000000091px;height:5.399999999999864px;background:#374151;border-radius:50%"></div>
<div class="a" style="left:2353.2px;top:746.4000000000001px;width:5.400000000000091px;height:5.399999999999864px;background:#374151;border-radius:50%"></div>
<div class="a" style="left:2362.4px;top:746.4000000000001px;width:5.400000000000091px;height:5.399999999999864px;background:#374151;border-radius:50%"></div>
<div class="a" style="left:0px;top:790px;width:2424px;height:77px;background:#f3f4f6"></div>
<div class="a" style="left:0px;top:867px;width:2424px;height:2px;background:#d5d8dd"></div>
<div class="a" style="left:21px;top:812px;width:32px;height:32px;border:2px solid #9ca3af;border-radius:8px;background:#fff"></div>
<div class="t " style="left:106.0px;top:812.3px;font-size:28px;line-height:28px;color:#111827;">9/11 - Client Tasks update</div>
<div class="t " style="left:622.0px;top:812.3px;font-size:28px;line-height:28px;color:#3d9163;-webkit-text-stroke:1.0px #3d9163;">Untitled Proposal</div>
<div class="a" style="left:1250px;top:804px;width:238px;height:42px;background:#dbeafe;border-radius:8px"></div>
<div class="t " style="left:1250.0px;width:238px;text-align:center;top:813.6px;font-size:21px;line-height:21px;color:#2f5dd0;-webkit-text-stroke:0.5px #2f5dd0;">Awaiting acceptance</div>
<div class="t " style="left:1519.0px;width:200px;text-align:right;top:812.3px;font-size:28px;line-height:28px;color:#374151;">$300.00</div>
<div class="t " style="left:1763.0px;top:812.3px;font-size:28px;line-height:28px;color:#374151;">Jul 14th</div>
<div class="a" style="left:2344.0px;top:825.4000000000001px;width:5.400000000000091px;height:5.399999999999864px;background:#374151;border-radius:50%"></div>
<div class="a" style="left:2353.2px;top:825.4000000000001px;width:5.400000000000091px;height:5.399999999999864px;background:#374151;border-radius:50%"></div>
<div class="a" style="left:2362.4px;top:825.4000000000001px;width:5.400000000000091px;height:5.399999999999864px;background:#374151;border-radius:50%"></div>
<div class="a" style="left:0px;top:869px;width:2424px;height:77px;background:#ffffff"></div>
<div class="a" style="left:0px;top:946px;width:2424px;height:2px;background:#d5d8dd"></div>
<div class="a" style="left:21px;top:891px;width:32px;height:32px;border:2px solid #9ca3af;border-radius:8px;background:#fff"></div>
<div class="t " style="left:106.0px;top:891.3px;font-size:28px;line-height:28px;color:#111827;">6/12 - Project File Search</div>
<div class="t " style="left:622.0px;top:891.3px;font-size:28px;line-height:28px;color:#3d9163;-webkit-text-stroke:1.0px #3d9163;">Untitled Proposal</div>
<div class="a" style="left:1250px;top:883px;width:238px;height:42px;background:#dbeafe;border-radius:8px"></div>
<div class="t " style="left:1250.0px;width:238px;text-align:center;top:892.6px;font-size:21px;line-height:21px;color:#2f5dd0;-webkit-text-stroke:0.5px #2f5dd0;">Awaiting acceptance</div>
<div class="t " style="left:1519.0px;width:200px;text-align:right;top:891.3px;font-size:28px;line-height:28px;color:#374151;">$300.00</div>
<div class="t " style="left:1763.0px;top:891.3px;font-size:28px;line-height:28px;color:#374151;">Jul 14th</div>
<div class="a" style="left:2344.0px;top:904.4000000000001px;width:5.400000000000091px;height:5.399999999999864px;background:#374151;border-radius:50%"></div>
<div class="a" style="left:2353.2px;top:904.4000000000001px;width:5.400000000000091px;height:5.399999999999864px;background:#374151;border-radius:50%"></div>
<div class="a" style="left:2362.4px;top:904.4000000000001px;width:5.400000000000091px;height:5.399999999999864px;background:#374151;border-radius:50%"></div>
</div>
<div class="a" style="left:428px;top:1372px;width:2424px;height:2px;background:#d5d8dd"></div>
<div class="a" style="left:1451px;top:1389px;width:151px;height:69px;border:2px solid #e5e7eb;border-radius:9px;background:#fff"></div>
<div class="t " style="left:1474.0px;top:1408.3px;font-size:28px;line-height:28px;color:#aeb2b9;">Previous</div>
<div class="a" style="left:1610px;top:1389px;width:108px;height:69px;border:2px solid #d1d5db;border-radius:9px;background:#fff"></div>
<div class="t " style="left:1633.0px;top:1408.3px;font-size:28px;line-height:28px;color:#2b3444;">1</div>
<svg class="a" style="left:1664px;top:1410px;" width="30" height="26" viewBox="0 0 30 26"><path d="M6 7 L15 16 L24 7" fill="none" stroke="#3f9466" stroke-width="5" stroke-linecap="round" stroke-linejoin="round"/></svg>
<div class="a" style="left:1726px;top:1389px;width:103px;height:69px;border:2px solid #d1d5db;border-radius:9px;background:#fff"></div>
<div class="t " style="left:1751.0px;top:1408.3px;font-size:28px;line-height:28px;color:#2b3444;">Next</div>
<div class="a" style="left:2744px;top:1494px;width:96px;height:96px;background:#4870f5;border-radius:50%;box-shadow:0 3px 24px rgba(0,0,0,0.16),0 1px 6px rgba(0,0,0,0.08)"></div>
<svg class="a" style="left:2768px;top:1515px;" width="48" height="55" viewBox="0 0 48 55"><path d="M7.5 3 H41 a4 4 0 0 1 4 4 V50.5 L36 45.5 H7.5 a4 4 0 0 1 -4-4 V7 a4 4 0 0 1 4-4 Z" fill="#fff"/><path d="M10 33.5 C17 39.5 31 39.5 38 33.5" fill="none" stroke="#4870f5" stroke-width="2.4" stroke-linecap="round"/></svg>
</body></html>
